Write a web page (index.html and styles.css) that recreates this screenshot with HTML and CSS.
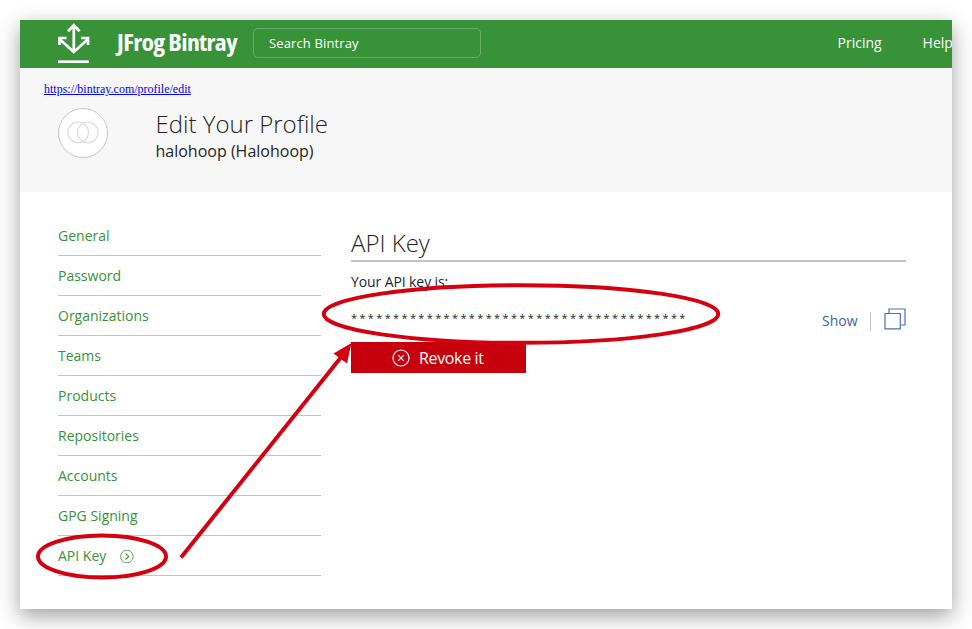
FILE: index.html
```html
<!DOCTYPE html>
<html lang="en">
<head>
<meta charset="utf-8">
<title>Edit Your Profile</title>
<link rel="stylesheet" href="styles.css">
</head>
<body>
<div class="window">
  <header class="topbar">
    <svg class="logo" width="32" height="41" viewBox="0 0 32 41" fill="none" stroke="#fff" stroke-width="2.7">
      <path d="M15.8 2V28M10 8.2L15.8 2.2L21.6 8.2M2 16.5L15.8 29L29.6 16.5M1.5 22V15H8.5M23 15H30V22"/>
      <path d="M0 38.7H31"/>
    </svg>
    <div class="brand"><span class="brand-text">JFrog Bintray</span></div>
    <div class="search">Search Bintray</div>
    <nav class="links"><a>Pricing</a><a class="help">Help</a></nav>
  </header>
  <section class="profile">
    <a class="url">https://bintray.com/profile/edit</a>
    <div class="identity">
      <div class="avatar">
        <svg width="34" height="24" viewBox="0 0 34 24" fill="none" stroke="#e0e0e0" stroke-width="1.3"><circle cx="12.2" cy="11.5" r="10.3"/><circle cx="21.8" cy="11.5" r="10.3"/></svg>
      </div>
      <div>
        <h1>Edit Your Profile</h1>
        <div class="user">halohoop (Halohoop)</div>
      </div>
    </div>
  </section>
  <main class="content">
    <ul class="menu">
      <li>General</li>
      <li>Password</li>
      <li>Organizations</li>
      <li>Teams</li>
      <li>Products</li>
      <li>Repositories</li>
      <li>Accounts</li>
      <li>GPG Signing</li>
      <li>API Key
        <svg width="14" height="14" viewBox="0 0 14 14" fill="none" stroke="#389238"><circle cx="6.9" cy="7.5" r="6.3" stroke-width=".8"/><path d="M5.5 4.3L8.7 7.4L5.5 10.5" stroke-width="1.1"/></svg>
      </li>
    </ul>
    <section class="panel">
      <h2>API Key</h2>
      <p class="label">Your API key is:</p>
      <div class="key-row">
        <span class="key">****************************************</span>
        <a class="show">Show</a>
        <svg class="copy" width="22" height="22" viewBox="0 0 22 22" fill="none" stroke="#4d70aa" stroke-width="1.2"><path d="M5 5V1H21V17H17"/><path d="M1 5.5H16.3V20.8H1Z"/></svg>
      </div>
      <div class="revoke">
        <svg width="18" height="18" viewBox="0 0 18 18" fill="none" stroke="#fff" stroke-width="1.2"><circle cx="9" cy="9" r="8"/><path d="M6.2 6.2L11.8 11.8M11.8 6.2L6.2 11.8"/></svg>
        <span>Revoke it</span>
      </div>
    </section>
  </main>
</div>
<svg class="annotations" width="972" height="629" viewBox="0 0 972 629" fill="none" stroke="#d4000f" stroke-width="4">
  <ellipse cx="521" cy="314" rx="197.3" ry="28.8"/>
  <ellipse cx="102" cy="556.5" rx="64" ry="21"/>
  <path d="M181 557.5L342 356"/>
  <path d="M351.5 343L333.5 353.5L347 363.5Z" fill="#d4000f" stroke="none"/>
</svg>
</body>
</html>
```
FILE: styles.css
```css
* { box-sizing: border-box; }
body {
  margin: 0;
  padding: 20px;
  background: #fff;
  font-family: "Open Sans", sans-serif;
  color: #252525;
}
.window {
  width: 932px;
  height: 589px;
  overflow: hidden;
  background: #fff;
  box-shadow: 0 7px 20px rgba(0, 0, 0, .38);
}
.topbar {
  display: flex;
  height: 48px;
  padding-left: 38px;
  background: #389238;
  color: #fff;
}
.logo { flex: none; margin-top: 3px; }
.brand { flex: none; width: 163px; padding-left: 27px; line-height: 44px; }
.brand-text {
  display: inline-block;
  font-size: 23px;
  font-weight: 700;
  font-stretch: 75%;
  letter-spacing: -.6px;
  white-space: nowrap;
  transform: scaleX(1.12);
  transform-origin: left center;
}
.search {
  flex: none;
  width: 228px;
  height: 30px;
  margin-top: 8px;
  padding-left: 15px;
  border: 1px solid #69ac69;
  border-radius: 5px;
  font-size: 13px;
  line-height: 29px;
  letter-spacing: .13px;
}
.links {
  display: flex;
  flex: none;
  gap: 41px;
  margin-left: 356.5px;
  font-size: 14px;
  line-height: 46px;
}
.profile {
  height: 124px;
  padding: 14px 24px 0;
  background: #f7f7f7;
}
.url {
  display: block;
  height: 15px;
  color: #0000ee;
  font: 12px/15px "Liberation Serif", serif;
  text-decoration: underline;
}
.identity { display: flex; gap: 47.5px; padding: 11px 0 0 14px; }
.avatar {
  display: flex;
  align-items: center;
  justify-content: center;
  width: 50px;
  height: 50px;
  border: 1px solid #c6c6c6;
  border-radius: 50%;
  background: #fff;
}
h1, h2 { margin: 0; font-size: 24px; font-weight: 300; line-height: 32px; }
.user { font-size: 16px; line-height: 22px; }
.content { display: flex; gap: 30px; padding: 24px 46px 0 38px; }
.menu { width: 263px; margin: 0; padding: 0; list-style: none; }
.menu li {
  display: flex;
  align-items: center;
  gap: 14px;
  height: 40px;
  border-bottom: 1px solid #c3c3c3;
  color: #389238;
  font-size: 14px;
}
.panel { width: 555px; padding-top: 11px; }
h2 { height: 35px; border-bottom: 2px solid #c3c3c3; }
.label { margin: 10px 0 0; font-size: 14px; line-height: 20px; letter-spacing: -.1px; }
.key-row { display: flex; height: 50px; padding-top: 16px; line-height: 20px; }
.key { flex: 1; font-size: 11px; letter-spacing: 2.36px; }
.show {
  height: 19px;
  margin-top: 4px;
  padding-right: 12.5px;
  border-right: 1px solid #c3c3c3;
  color: #3c63a3;
  font-size: 14px;
  line-height: 17px;
}
.copy { margin-left: 13px; }
.revoke {
  display: flex;
  align-items: center;
  gap: 9px;
  width: 175px;
  height: 31px;
  padding-left: 41px;
  background: #c7000d;
  color: #fff;
  font-size: 16px;
  letter-spacing: -.35px;
}
.annotations { position: absolute; left: 0; top: 0; }
```
